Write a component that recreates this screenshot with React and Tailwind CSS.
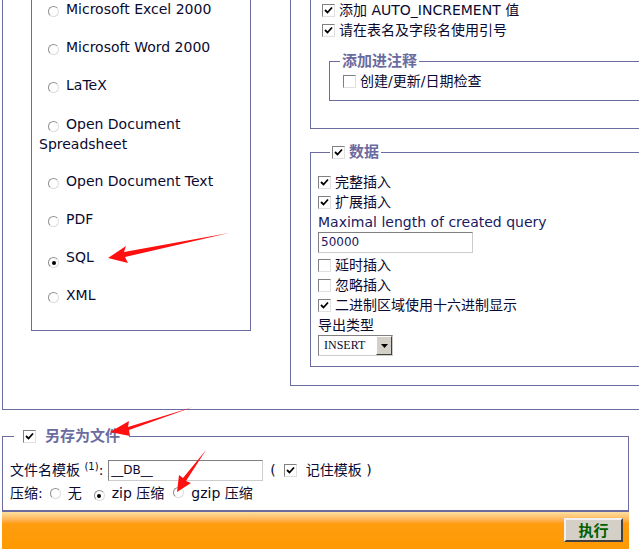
import React from "react";

const F = { fontFamily: '"DejaVu Sans", Verdana, "Noto Sans CJK SC", sans-serif' };

function Cb({ on }) {
  return (
    <span className="inline-flex items-center justify-center w-[13px] h-[13px] border border-[#808080] border-r-[#e0e0e0] border-b-[#e0e0e0] bg-white mr-[4px] shrink-0">
      {on && (
        <svg width="9" height="9" viewBox="0 0 9 9"><path d="M1 4 L3.5 6.5 L8 1.5" stroke="#000" strokeWidth="1.8" fill="none" /></svg>
      )}
    </span>
  );
}
function Rd({ on }) {
  return (
    <span className="inline-flex items-center justify-center w-[11px] h-[11px] rounded-full border border-[#909090] border-r-[#ddd] border-b-[#ddd] bg-white shrink-0">
      {on && <span className="w-[4px] h-[4px] rounded-full bg-black" />}
    </span>
  );
}
function Row({ on, children }) {
  return <div className="flex items-center h-[20px] text-[14px] text-[#0a0a30]"><Cb on={on} />{children}</div>;
}

const radios = ["Microsoft Excel 2000", "Microsoft Word 2000", "LaTeX", "OPEN_SS", "Open Document Text", "PDF", "SQL", "XML"];

export default function App() {
  return (
    <div className="relative w-[641px] h-[549px] bg-white overflow-hidden text-[#0a0a30]" style={F}>
      <div className="h-[410px] ml-[2px] w-[637px] border-l border-b border-[#6b6ba0] flex">
        <div className="w-[287px] shrink-0">
          <div className="ml-[28px] w-[220px] h-[331px] border-l border-r border-b border-[#6b6ba0] pl-[16px] text-[14px]">
            {radios.map((r) => (
              <div key={r} className={r === "OPEN_SS" ? "h-[58px]" : "h-[38px]"}>
                {r === "OPEN_SS" ? (
                  <div className="-ml-[9px] leading-[20px]">
                    <span className="inline-flex items-center ml-[9px] mr-[7px] translate-y-[3px]"><Rd /></span>Open Document
                    <br />Spreadsheet
                  </div>
                ) : (
                  <div className="flex items-center h-[18px] gap-[7px]"><span className="translate-y-[3px]"><Rd on={r === "SQL"} /></span>{r}</div>
                )}
              </div>
            ))}
          </div>
        </div>
        <div className="flex-1 h-[386px] border-l border-b border-[#6b6ba0] pl-[19px]">
          <div className="h-[129px] border-l border-b border-[#6b6ba0] pl-[11px]">
            <Row on>添加 AUTO_INCREMENT 值</Row>
            <Row on>请在表名及字段名使用引号</Row>
            <fieldset className="mt-[12px] ml-[7px] border border-r-0 border-[#6b6ba0] h-[49px] pl-[13px]">
              <legend className="px-[2px] ml-[-3px] text-[15px] font-bold text-[#6b6ba0] leading-[18px]">添加进注释</legend>
              <div className="mt-[1px]"><Row>创建/更新/日期检查</Row></div>
            </fieldset>
          </div>
          <fieldset className="mt-[14px] border border-r-0 border-[#6b6ba0] h-[224px] pl-[7px]">
            <legend className="flex items-center ml-[12px] px-[2px] text-[15px] font-bold text-[#6b6ba0] leading-[18px]"><Cb on />数据</legend>
            <div className="mt-[11px]">
              <Row on>完整插入</Row>
              <Row on>扩展插入</Row>
              <div className="h-[20px] text-[14px] leading-[20px] text-[#1a1a60]">Maximal length of created query</div>
              <div className="w-[155px] h-[21px] border border-[#808080] border-r-[#ccc] border-b-[#ccc] text-[12px] leading-[19px] pl-[2px] text-[#1a1a60]">50000</div>
              <div className="mt-[2px]"><Row>延时插入</Row></div>
              <Row>忽略插入</Row>
              <Row on>二进制区域使用十六进制显示</Row>
              <div className="h-[20px] text-[14px] leading-[20px]">导出类型</div>
              <div className="flex w-[75px] h-[21px] border border-[#808080] border-r-[#ccc] border-b-[#ccc]">
                <span className="flex-1 text-[12px] leading-[19px] pl-[5px]" style={{ fontFamily: '"Liberation Serif", serif' }}>INSERT</span>
                <span className="w-[16px] bg-[#d4d0c8] border border-[#fff] border-r-[#404040] border-b-[#404040] flex items-center justify-center">
                  <svg width="7" height="4"><path d="M0 0H7L3.5 4Z" fill="#000" /></svg>
                </span>
              </div>
            </div>
          </fieldset>
        </div>
      </div>
      <fieldset className="mt-[17px] ml-[2px] w-[627px] h-[83px] border border-b-0 border-[#6b6ba0] pl-[7px] text-[14px]">
        <legend className="flex items-center ml-[4px] px-[9px] text-[15px] font-bold text-[#6b6ba0] leading-[18px]"><span className="mr-[5px] flex"><Cb on /></span>另存为文件</legend>
        <div className="flex items-center mt-[13px] h-[24px]">
          <span>文件名模板 <sup className="text-[10px]">(1)</sup>:</span>
          <span className="ml-[5px] w-[155px] h-[21px] border border-[#808080] border-r-[#ccc] border-b-[#ccc] text-[12px] leading-[19px] pl-[2px]">__DB__</span>
          <span className="ml-[7px] mr-[8px]">(</span><Cb on /><span className="ml-[5px]">记住模板 )</span>
        </div>
        <div className="flex items-center h-[22px] gap-[7px]">
          <span>压缩:</span><Rd /><span>无</span><span className="ml-[5px]"><Rd on /></span><span>zip 压缩</span><span className="ml-[2px]"><Rd /></span><span>gzip 压缩</span>
        </div>
      </fieldset>
      <div className="ml-[2px] w-[627px] h-[40px] border-t-2 border-[#6b6ba0] bg-gradient-to-b from-[#fde0a0] via-[#ff9d10] via-30% to-[#ff9900] flex justify-end items-start pr-[6px] pt-[6px]">
        <button className="w-[59px] h-[24px] bg-[#d4d0c8] border-2 border-[#f0f0f0] border-r-[#404040] border-b-[#404040] text-[15px] font-bold text-[#006000]">执行</button>
      </div>
      <svg className="absolute left-0 top-0 pointer-events-none" width="641" height="549">
        <g fill="#ff1010">
          <path d="M229 233 L124 252 L126 246 L108 258 L128 263 L125 257 Z" />
          <path d="M193 407 L128 427 L129 421 L110 432 L130 436 L129 430 Z" />
          <path d="M206 450 L183 478 L179 475 L177 492 L191 483 L186 481 Z" />
        </g>
      </svg>
    </div>
  );
}
